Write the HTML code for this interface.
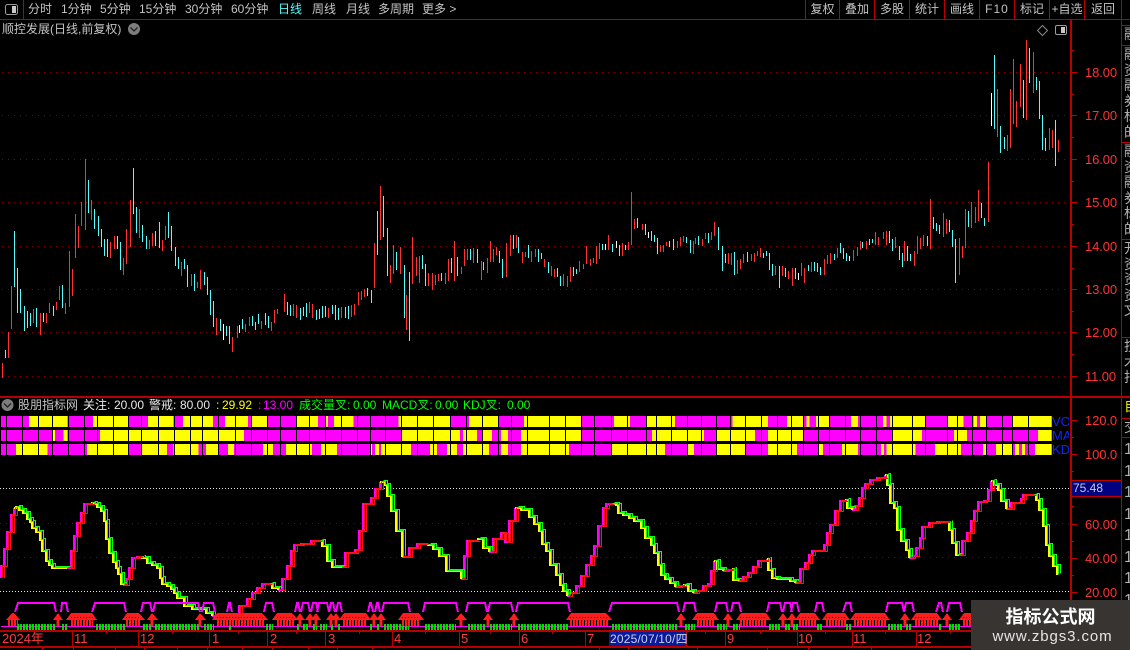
<!DOCTYPE html>
<html lang="zh"><head><meta charset="utf-8"><title>K</title>
<style>
html,body{margin:0;padding:0;background:#000}
#p{position:relative;width:1130px;height:650px;overflow:hidden;background:#000;font-family:"Liberation Sans","WenQuanYi Zen Hei","Noto Sans CJK SC",sans-serif}
#p svg{position:absolute;left:0;top:0}
.t{position:absolute;white-space:nowrap;font-size:12px;line-height:14px;color:#c4c4c4}
.c{text-align:center}
.a{color:#ff3434;font-size:13px;letter-spacing:-.1px;left:1085px}
.g{color:#00ff00}
.col{position:absolute;left:1124px;width:6px;overflow:hidden;white-space:normal;word-break:break-all;font-size:14px;line-height:15.5px;color:#b0b0b0}
.b{position:absolute;left:1052px;width:17px;overflow:hidden;white-space:nowrap;color:#0a28ff;font-size:13px;line-height:13px}
.r{color:#ff3c3c;font-size:13px}
</style></head><body><div id="p">
<svg width="1130" height="650" viewBox="0 0 1130 650" xmlns="http://www.w3.org/2000/svg">
<defs>
<path id="up" d="M1 576H2V565H5V548H8V531H12V514H15V507M68 567H72V550H75V535H78V522H82V512H85V503H92V502M124 584H127V578H130V567H133V557H138V556H142M213 615H220V613H240V605H248V598H253V592H258V587H263V583H270M279 589H283V578H288V565H292V550H295V544H302V543H312V540H320M343 566H346V552H356V549H360V530H364V503H372V497H376V488H381V481M403 556H410V547H418V543H428M462 578H465V555H468V540H478M490 551H494V538H502V532H506V541H510V520H516V507M568 595H570V592H577V585H582V575H587V564H592V555H595V545H599V525H604V507H607V503H612M676 586H680V585H684V584M694 592H697V590H704V585H709V583H712V570H715V560M724 570H727V569H733V568M739 580H744V576H749V572H754V566H759V560H768V558M796 582H801V568H806V562H810V554H813V550H825V544H828V532H831V524H836V510H841V500H846V499M853 509H856V505H860V497H863V487H866V483H871V479H878V477H886V474M910 557H913V555H917V547H921V537H923V526H930V522H938V521H950M960 554H963V540H968V532H972V520H975V510H979V501H985V500H989V489H992V480M1007 508H1012V502H1022V498H1024V494H1034"/>
<path id="dn" d="M15 507H17V506H20V509H24V512H28V518H31V521H33V527H37V531H41V539H43V550H47V560H50V564H53V567H68M92 502H95V503H98V506H102V510H105V520H107V538H110V552H114V561H117V567H119V573H122V583H124V584M142 556H143V557H148V562H153V564H158V567H161V577H163V583H168V585H172V588H175V592H178V597H185V605H193V608H207V612H213V615M270 583H273V587H279V589M320 540H323V545H328V560H333V566H343M381 481H385V484H388V495H392V510H397V530H403V556M428 544H434V548H440V555H447V570H462V578M478 538H484V547H490V551M516 507H522V509H530V516H535V523H540V530H543V543H547V550H551V564H557V574H561V584H564V590H568V595M612 503H617V504H619V512H624V514H630V517H635V520H642V527H646V537H652V544H655V552H659V564H662V574H666V578H671V582H676V586M684 584H689V590H694V592M715 560H718V568H724V570M733 568H734V579H739V580M768 558H769V569H773V577H778V578H791V580H796V582M846 499H848V507H853V509M886 474H888V484H891V502H895V507H898V529H902V540H907V549H910V557M950 521V529H953V542H957V554H960M992 480H994V484H999V489H1002V500H1007V508M1034 494H1037V499H1040V509H1044V525H1047V544H1050V555H1054V565H1058V574"/>
</defs>
<g fill="none" shape-rendering="crispEdges">
<path stroke="#8c0000" stroke-dasharray="1 5" d="M2 72.5H1070M2 115.5H1070M2 159.5H1070M2 202.5H1070M2 246.5H1070M2 289.5H1070M2 332.5H1070M2 376.5H1070"/>
<g transform="translate(.5 0)">
<path stroke="#ff3232" d="M2 363V378M8 332V358M11 286V329M33 309V323M40 313V335M46 313V323M49 303V313M56 302V310M59 286V300M65 303V314M69 251V307M72 269V296M75 214V258M78 226V248M81 202V226M85 159V230M91 200V220M110 242V258M114 236V249M123 258V275M126 229V264M130 200V247M139 209V238M149 240V249M152 233V246M162 240V251M165 226V240M181 262V276M191 274V286M197 282V288M200 270V289M216 318V335M232 337V352M237 326V338M245 324V332M249 317V326M261 321V329M271 322V331M274 310V323M277 309V314M284 294V312M293 304V316M296 305V318M309 302V313M312 304V318M328 308V318M341 307V318M351 305V317M354 304V315M358 292V305M361 291V300M364 289V297M374 243V288M380 186V240M390 265V283M393 245V274M400 247V274M406 295V330M412 237V284M416 257V276M419 256V283M428 273V286M432 273V290M435 275V285M438 274V281M445 273V284M448 259V281M454 241V281M461 267V274M464 249V266M467 249V260M473 248V263M481 261V280M487 258V273M490 241V262M493 249V262M496 247V255M506 243V277M510 235V256M516 235V248M522 252V263M525 252V257M531 251V262M535 249V257M544 259V267M551 266V276M554 269V277M563 274V286M567 276V287M570 267V282M579 261V272M583 264V269M586 246V264M590 259V266M593 258V263M596 246V264M599 243V259M608 235V250M622 243V256M628 242V250M631 192V245M634 219V229M642 224V230M660 245V252M663 245V252M666 242V246M677 241V248M680 237V246M683 236V242M693 241V254M695 238V244M702 239V246M705 233V239M711 232V240M714 222V236M728 253V264M731 253V265M737 260V274M740 259V269M743 254V263M751 254V261M754 253V262M757 251V256M760 248V257M775 266V275M782 266V276M788 271V279M792 268V286M801 263V276M804 268V283M811 262V272M824 259V275M827 255V264M830 253V264M837 248V258M853 250V261M857 247V256M860 241V250M866 241V249M875 232V245M878 237V245M883 232V239M886 231V245M895 237V248M904 241V261M914 251V266M917 236V254M920 238V249M923 235V246M930 199V249M943 213V237M946 219V234M959 238V275M962 246V258M965 209V248M971 202V228M975 207V223M978 190V221M988 162V222M997 89V137M1007 135V151M1010 89V148M1013 59V124M1016 101V127M1020 64V107M1026 40V120M1033 52V93M1049 128V150M1052 130V148M1058 140V152"/>
<path stroke="#54fcfc" d="M5 350V358M14 231V287M17 268V313M20 289V313M24 306V331M27 311V328M30 313V326M36 308V327M43 313V322M53 306V316M62 285V308M88 180V213M94 209V229M98 216V236M101 229V247M104 239V256M107 239V257M117 236V249M120 242V270M133 168V214M136 207V233M142 225V242M146 236V249M155 231V246M159 222V248M168 212V238M171 226V251M175 247V266M178 257V269M184 259V269M187 265V287M194 274V291M204 272V285M207 277V295M210 290V315M213 301V327M220 319V331M226 326V336M229 326V344M242 319V329M252 316V326M255 322V330M258 314V324M265 313V325M268 316V328M287 302V315M290 305V316M300 308V320M303 307V316M306 303V317M316 310V320M319 309V319M322 306V318M325 306V317M332 305V314M335 305V320M338 308V320M345 307V318M348 306V319M367 288V296M371 290V303M377 211V255M383 196V237M387 228V276M396 252V270M404 265V318M409 272V341M422 255V269M425 264V286M441 273V281M451 258V273M457 257V276M470 249V260M477 249V263M483 262V270M499 251V263M502 259V278M513 235V249M518 237V253M528 245V258M538 249V262M541 253V259M548 262V273M557 268V277M560 276V286M573 267V276M576 269V274M602 244V250M612 244V252M619 245V256M625 245V250M637 218V228M645 224V235M651 231V241M654 235V242M657 238V254M669 241V247M673 239V250M686 237V243M690 240V253M698 236V245M708 233V243M718 227V250M722 246V271M725 254V263M734 252V275M747 252V262M763 253V258M766 251V256M769 253V270M772 264V276M779 266V288M785 268V277M795 268V279M808 265V271M814 262V271M817 263V272M820 267V275M834 254V260M840 243V253M843 248V259M846 253V261M862 242V248M869 239V245M872 239V243M889 231V243M892 239V251M899 246V260M902 253V267M907 246V261M910 254V261M927 236V246M933 217V229M936 223V231M939 225V234M949 220V232M952 230V247M955 239V283M968 211V227M981 203V218M984 218V226M994 55V129M1000 126V153M1004 137V149M1023 80V118M1029 48V83M1036 77V90M1039 81V119M1042 115V150M1045 138V151M1055 120V166"/>
<path stroke="#fff" d="M223 324V340M239 325V333M605 244V250M616 241V248M648 232V238M798 273V280M849 256V261M991 93V126"/>
</g>
<path stroke="#b80000" d="M0 19.5H1130M23.5 0V19M805.5 0V19M839.5 0V19M874.5 0V19M909.5 0V19M944.5 0V19M979.5 0V19M1014.5 0V19M1049.5 0V19M1084.5 0V19M1121.5 0V397M1121 25.5H1130M1121 45.5H1130M1121 142.5H1130M1121 239.5H1130M1121 337.5H1130M1121.5 398V650M1121 418.5H1130M1121 437.5H1130"/>
<path stroke="#b80000" stroke-width="2" d="M1071 19V650M0 397H1130M0 631H1071M0 647H1071"/>
<path stroke="#c40000" d="M1072 72.5H1077M1072 115.5H1077M1072 159.5H1077M1072 202.5H1077M1072 246.5H1077M1072 289.5H1077M1072 332.5H1077M1072 376.5H1077M1072 94.5H1074M1072 137.5H1074M1072 181.5H1074M1072 224.5H1074M1072 268.5H1074M1072 311.5H1074M1072 354.5H1074M1072 50.5H1074M1072 420.5H1077M1072 454.5H1077M1072 524.5H1077M1072 558.5H1077M1072 592.5H1077M1072 437.5H1074M1072 471.5H1074M1072 541.5H1074M1072 575.5H1074M1072 506.5H1074M1072 610.5H1074"/>
<path stroke="#b80000" d="M72.5 632V646M138.5 632V646M209.5 632V646M267.5 632V646M325.5 632V646M392.5 632V646M459.5 632V646M519.5 632V646M585.5 632V646M686.5 632V646M725.5 632V646M797.5 632V646M852.5 632V646M916.5 632V646M106.5 632V634M172.5 632V634M238.5 632V634M296.5 632V634M359.5 632V634M425.5 632V634M490.5 632V634M552.5 632V634M630.5 632V634M705.5 632V634M760.5 632V634M825.5 632V634M885.5 632V634M950.5 632V634M42.5 647V650M73.5 647V650M115.5 647V650M144.5 647V650M177.5 647V650M207.5 647V650M242.5 647V650M272.5 647V650M308.5 647V650M337.5 647V650M372.5 647V650M599.5 647V650M628.5 647V650M697.5 647V650M767.5 647V650M808.5 647V650M871.5 647V650"/>
<path stroke="#8c0000" stroke-dasharray="1 5" d="M0 523.5H1070M0 557.5H1070"/>
<path stroke="#e8e8e8" stroke-dasharray="1 2" d="M0 488.5H1070M0 591.5H1070"/>
</g>
<g shape-rendering="crispEdges">
<path fill="#ff00ff" d="M1 416H581V427H1ZM1 430H1052V441H1ZM1 444H1052V455H1ZM581 416H1052V427H581Z"/>
<path stroke="#ffff00" stroke-width="11" fill="none" d="M29 421.5H67.5M93 421.5H128.5M148 421.5H173.5M183 421.5H213M225 421.5H248M251.5 421.5H267M296.5 421.5H318M325 421.5H328M334 421.5H353.5M398.5 421.5H450M469 421.5H498M524 421.5H581M614 421.5H630M646 421.5H675M732.5 421.5H768M787 421.5H791M791 421.5H803M806.5 421.5H809.5M816 421.5H829M851 421.5H858M883 421.5H886.5M890 421.5H926M948 421.5H963.5M973.5 421.5H977M980 421.5H986M1012 421.5H1051.5M52 435.5H55M63.5 435.5H67.5M100 435.5H244M402 435.5H460M463 435.5H477M482 435.5H492M501 435.5H508M521 435.5H581M652 435.5H704M717 435.5H755M768 435.5H803M893 435.5H922M954 435.5H967M1038 435.5H1051.5M16 449.5H47.5M87 449.5H128.5M141 449.5H167M173.5 449.5H198.5M206 449.5H218.5M228 449.5H234M263 449.5H273M286 449.5H312M321 449.5H337M370 449.5H372M375 449.5H379M381 449.5H411M430 449.5H437M447 449.5H457M463 449.5H489M501 449.5H508M521 449.5H569M611 449.5H665M688 449.5H694M717 449.5H745.5M768 449.5H797M819 449.5H823M842 449.5H858M881 449.5H884M886.5 449.5H915.5M935 449.5H961M983 449.5H987M996 449.5H1012M1015 449.5H1019M1022 449.5H1025M1035 449.5H1051.5"/>
<path stroke="#000" fill="none" d="M6.5 415V456M22.5 415V456M38.5 415V456M52.5 415V456M68.5 415V456M84.5 415V456M97.5 415V456M113.5 415V456M128.5 415V456M141.5 415V456M158.5 415V456M174.5 415V456M190.5 415V456M202.5 415V456M218.5 415V456M235.5 415V456M251.5 415V456M267.5 415V456M280.5 415V456M296.5 415V456M309.5 415V456M325.5 415V456M341.5 415V456M357.5 415V456M370.5 415V456M385.5 415V456M401.5 415V456M417.5 415V456M433.5 415V456M450.5 415V456M466.5 415V456M482.5 415V456M498.5 415V456M511.5 415V456M527.5 415V456M549.5 415V456M565.5 415V456M581.5 415V456M594.5 415V456M611.5 415V456M627.5 415V456M646.5 415V456M656.5 415V456M671.5 415V456M687.5 415V456M701.5 415V456M716.5 415V456M730.5 415V456M745.5 415V456M761.5 415V456M777.5 415V456M791.5 415V456M803.5 415V456M818.5 415V456M829.5 415V456M845.5 415V456M860.5 415V456M876.5 415V456M892.5 415V456M912.5 415V456M925.5 415V456M947.5 415V456M957.5 415V456M972.5 415V456M986.5 415V456M1002.5 415V456M1012.5 415V456M1028.5 415V456"/>
</g>
<g fill="none" shape-rendering="crispEdges">
<use href="#up" stroke="#ff00ff" stroke-width="2" transform="translate(-1 1)"/>
<use href="#dn" stroke="#ffff00" stroke-width="2" transform="translate(-1 1)"/>
<use href="#up" stroke="#ff1010" stroke-width="1" transform="translate(.5 .5)"/>
<use href="#up" stroke="#ff1010" stroke-width="1" transform="translate(2.5 1.5)"/>
<use href="#dn" stroke="#10ff10" stroke-width="1" transform="translate(.5 .5)"/>
<use href="#dn" stroke="#10ff10" stroke-width="1" transform="translate(2.5 -.5)"/>
</g>
<g fill="none" shape-rendering="crispEdges">
<path stroke="#ff00ff" d="M1 626.5H972"/>
<path stroke="#ff00ff" stroke-width="2" d="M15 612L18 603H54L56 612M61 612L62 603H66L68 612M92 612L95 603H124L126 612M141 612L143 603H150L152 612M153 612L155 603H198L200 612M202 612L204 603H213L215 612M227 612L229 603H230L232 612M264 612L266 603H272L274 612M295 612L297 603H298L300 612M301 612L303 603H308L310 612M311 612L313 603H316L318 612M317 612L319 603H327L329 612M329 612L331 603H333L335 612M336 612L338 603H340L342 612M368 612L370 603H371L373 612M375 612L377 603H378L380 612M382 612L384 603H408L410 612M423 612L425 603H456L458 612M466 612L468 603H485L487 612M488 612L490 603H511L513 612M516 612L518 603H568L570 612M609 612L612 603H677L679 612M683 612L685 603H694L696 612M715 612L717 603H726L728 612M731 612L733 603H739L741 612M767 612L769 603H780L782 612M783 612L785 603H790L792 612M791 612L793 603H797L799 612M815 612L817 603H822L824 612M843 612L846 603H850L852 612M886 612L888 603H902L904 612M904 612L906 603H912L914 612M936 612L939 603H941L943 612M947 612L949 603H960L962 612"/>
<path stroke="#00e000" stroke-width="6" stroke-dasharray="2 1" d="M17 627H56M62 627H68M96 627H125M143 627H151M155 627H199M204 627H214M229 627H231M266 627H273M297 627H299M303 627H309M313 627H317M320 627H327M331 627H334M338 627H341M370 627H372M377 627H379M384 627H409M425 627H456M468 627H486M490 627H512M518 627H568M612 627H678M685 627H695M717 627H727M733 627H740M769 627H781M785 627H791M793 627H798M817 627H823M846 627H851M888 627H903M906 627H912M939 627H942M949 627H961"/>
</g>
<g fill="#ff1c1c" shape-rendering="crispEdges">
<path d="M6 620L12 613H14L20 620ZM53 620L58 613L63 620ZM66 620L71 613H92L97 620ZM122 620L127 613H139L145 620ZM147 620L152 613L158 620ZM195 620L200 613L206 620ZM212 620L217 613H262L268 620ZM272 620L277 613H292L298 620ZM295 620L300 613L305 620ZM305 620L310 613L315 620ZM311 620L316 613L321 620ZM326 620L331 613L336 620ZM331 620L336 613L341 620ZM339 620L344 613H366L371 620ZM369 620L374 613L379 620ZM376 620L381 613L386 620ZM398 620L403 613H419L424 620ZM455 620L461 613L467 620ZM483 620L488 613L493 620ZM509 620L514 613L519 620ZM566 620L571 613H606L612 620ZM676 620L681 613L686 620ZM692 620L697 613H714L719 620ZM723 620L728 613L733 620ZM736 620L741 613H766L771 620ZM778 620L783 613L788 620ZM787 620L792 613L797 620ZM795 620L800 613H815L820 620ZM822 620L827 613H845L850 620ZM850 620L855 613H885L890 620ZM900 620L905 613L910 620ZM911 620L916 613H937L942 620ZM942 620L947 613L952 620ZM959 620L964 613H975V620Z"/>
</g>
<g fill="none" shape-rendering="crispEdges">
<path stroke="#ff1c1c" stroke-width="6" stroke-dasharray="2 1" d="M8 623H18M71 623H93M126 623H141M217 623H264M277 623H294M343 623H367M402 623H420M570 623H608M697 623H715M740 623H767M799 623H816M826 623H846M854 623H886M915 623H938M963 623H975"/>
<path stroke="#ff1c1c" stroke-width="3" d="M58 620V626M152 620V626M200 620V626M300 620V626M310 620V626M316 620V626M331 620V626M336 620V626M374 620V626M381 620V626M461 620V626M488 620V626M514 620V626M681 620V626M728 620V626M783 620V626M792 620V626M905 620V626M947 620V626"/>
<path stroke="#000" stroke-width="1" stroke-dasharray="1 2" d="M71 617.5H93M126 617.5H141M217 617.5H264M277 617.5H294M343 617.5H367M402 617.5H420M570 617.5H608M697 617.5H715M740 617.5H767M799 617.5H816M826 617.5H846M854 617.5H886M915 617.5H938M963 617.5H975"/>
</g>
<rect x="5.5" y="4.5" width="12" height="10" rx="2" fill="#000" stroke="#9a9a9a"/>
<rect x="12" y="6" width="4" height="7" fill="#c8c8c8"/>
<circle cx="134" cy="29" r="6" fill="#7d7d7d"/>
<path d="M130.5 27.5L134 31L137.5 27.5" fill="none" stroke="#222" stroke-width="1.3"/>
<circle cx="7.5" cy="405" r="6" fill="#7d7d7d"/>
<path d="M4 403.5L7.5 407L11 403.5" fill="none" stroke="#222" stroke-width="1.3"/>
<path d="M1042.5 25.5L1047.5 30.5L1042.5 35.5L1037.5 30.5Z" fill="none" stroke="#8a8a8a"/>
<rect x="1055.5" y="25.5" width="11" height="9" rx="1.5" fill="none" stroke="#9a9a9a"/>
<rect x="1061" y="27" width="4" height="6" fill="#c8c8c8"/>
<rect x="1072" y="480" width="49" height="17" fill="#000080"/>
<path d="M1072 480.5H1121M1072 496.5H1121" stroke="#c00000" fill="none"/>
<rect x="609" y="632" width="77" height="14" fill="#0a1a9a"/>
<rect x="971" y="600" width="159" height="50" fill="#383432"/>
</svg>

<span class="t" style="left:28px;top:2px">分时</span>
<span class="t" style="left:61px;top:2px">1分钟</span>
<span class="t" style="left:100px;top:2px">5分钟</span>
<span class="t" style="left:139px;top:2px">15分钟</span>
<span class="t" style="left:185px;top:2px">30分钟</span>
<span class="t" style="left:231px;top:2px">60分钟</span>
<span class="t" style="left:278px;top:2px;color:#54fcfc">日线</span>
<span class="t" style="left:312px;top:2px">周线</span>
<span class="t" style="left:346px;top:2px">月线</span>
<span class="t" style="left:378px;top:2px">多周期</span>
<span class="t" style="left:422px;top:2px">更多 &gt;</span>
<span class="t c" style="left:806px;top:2px;width:33px">复权</span>
<span class="t c" style="left:840px;top:2px;width:34px">叠加</span>
<span class="t c" style="left:875px;top:2px;width:34px">多股</span>
<span class="t c" style="left:910px;top:2px;width:34px">统计</span>
<span class="t c" style="left:945px;top:2px;width:34px">画线</span>
<span class="t c" style="left:980px;top:2px;width:34px;letter-spacing:1px">F10</span>
<span class="t c" style="left:1015px;top:2px;width:34px">标记</span>
<span class="t c" style="left:1050px;top:2px;width:34px">+自选</span>
<span class="t c" style="left:1085px;top:2px;width:36px">返回</span>
<span class="t" style="left:2px;top:22px">顺控发展(日线,前复权)</span>

<span class="t a" style="top:66px">18.00</span>
<span class="t a" style="top:109px">17.00</span>
<span class="t a" style="top:153px">16.00</span>
<span class="t a" style="top:196px">15.00</span>
<span class="t a" style="top:240px">14.00</span>
<span class="t a" style="top:283px">13.00</span>
<span class="t a" style="top:326px">12.00</span>
<span class="t a" style="top:370px">11.00</span>
<span class="t a" style="top:414px">120.0</span>
<span class="t a" style="top:448px">100.0</span>
<span class="t a" style="top:518px">60.00</span>
<span class="t a" style="top:552px">40.00</span>
<span class="t a" style="top:586px">20.00</span>
<span class="t" style="left:1073px;top:481px;font-size:12px;color:#c4ccd8">75.48</span>

<span class="t" style="left:18px;top:398px">股朋指标网</span>
<span class="t" style="left:83px;top:398px;color:#e8e8e8">关注:</span>
<span class="t" style="left:114px;top:398px;color:#e8e8e8">20.00</span>
<span class="t" style="left:149px;top:398px;color:#e8e8e8">警戒:</span>
<span class="t" style="left:180px;top:398px;color:#e8e8e8">80.00</span>
<span class="t" style="left:216px;top:398px;color:#ffff00">:</span>
<span class="t" style="left:222px;top:398px;color:#ffff00">29.92</span>
<span class="t" style="left:258px;top:398px;color:#ff00ff">:</span>
<span class="t" style="left:263px;top:398px;color:#ff00ff">13.00</span>
<span class="t g" style="left:299px;top:398px">成交量叉:</span>
<span class="t g" style="left:353px;top:398px">0.00</span>
<span class="t g" style="left:382px;top:398px">MACD叉:</span>
<span class="t g" style="left:435px;top:398px">0.00</span>
<span class="t g" style="left:463px;top:398px">KDJ叉:</span>
<span class="t g" style="left:507px;top:398px">0.00</span>
<span class="b" style="top:415px">VOL</span>
<span class="b" style="top:429px">MACD</span>
<span class="b" style="top:443px">KDJ</span>

<span class="t r" style="left:2px;top:632px">2024年</span>
<span class="t r" style="left:74px;top:632px">11</span>
<span class="t r" style="left:140px;top:632px">12</span>
<span class="t r" style="left:212px;top:632px">1</span>
<span class="t r" style="left:270px;top:632px">2</span>
<span class="t r" style="left:328px;top:632px">3</span>
<span class="t r" style="left:394px;top:632px">4</span>
<span class="t r" style="left:461px;top:632px">5</span>
<span class="t r" style="left:521px;top:632px">6</span>
<span class="t r" style="left:587px;top:632px">7</span>
<span class="t" style="left:610px;top:632px;color:#c8d0e8;font-size:12px;letter-spacing:.2px">2025/07/10/四</span>
<span class="t r" style="left:727px;top:632px">9</span>
<span class="t r" style="left:798px;top:632px">10</span>
<span class="t r" style="left:853px;top:632px">11</span>
<span class="t r" style="left:917px;top:632px">12</span>

<div class="col" style="top:27px;height:18px">融</div>
<div class="col" style="top:47px;height:95px">融资融券标的</div>
<div class="col" style="top:144px;height:95px">融资融券标的</div>
<div class="col" style="top:241px;height:96px">开资资资文</div>
<div class="col" style="top:339px;height:58px">技术指</div>
<div class="col" style="top:399px;height:19px;color:#e8e800">自</div>
<div class="col" style="top:420px;height:17px">交</div>
<div class="col" style="top:439px;height:161px;font-size:16px;line-height:21.5px">1 1 1 1 1 1 1 1</div>

<span class="t" style="left:971px;top:607px;width:159px;text-align:center;color:#fff;font-size:18px;line-height:20px;font-weight:bold">指标公式网</span>
<span class="t" style="left:973px;top:628px;width:159px;text-align:center;color:#e6e6e6;font-size:15px;line-height:17px;letter-spacing:.9px">www.zbgs3.com</span>
</div></body></html>
